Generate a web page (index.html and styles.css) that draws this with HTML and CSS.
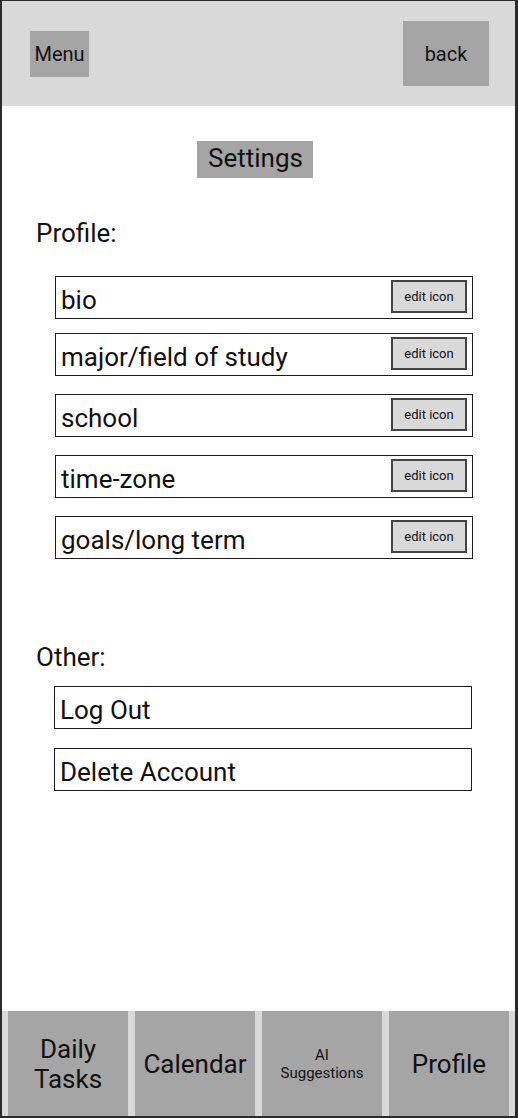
FILE: index.html
```html
<!DOCTYPE html>
<html lang="en">
<head>
<meta charset="utf-8">
<title>Settings</title>
<link rel="stylesheet" href="styles.css">
</head>
<body>
<div class="app">
  <header class="topbar">
    <div class="btn btn-menu">Menu</div>
    <div class="btn btn-back">back</div>
  </header>
  <main class="content">
    <div class="title-wrap"><h1 class="title">Settings</h1></div>
    <h2 class="section-label">Profile:</h2>
    <div class="rows rows-profile">
      <div class="row"><span class="row-text">bio</span><span class="edit">edit icon</span></div>
      <div class="row"><span class="row-text">major/field of study</span><span class="edit">edit icon</span></div>
      <div class="row"><span class="row-text">school</span><span class="edit">edit icon</span></div>
      <div class="row"><span class="row-text">time-zone</span><span class="edit">edit icon</span></div>
      <div class="row"><span class="row-text">goals/long term</span><span class="edit">edit icon</span></div>
    </div>
    <h2 class="section-label section-other">Other:</h2>
    <div class="rows rows-other">
      <div class="row row-plain"><span class="row-text">Log Out</span></div>
      <div class="row row-plain"><span class="row-text">Delete Account</span></div>
    </div>
  </main>
  <nav class="tabbar">
    <div class="tab">Daily<br>Tasks</div>
    <div class="tab">Calendar</div>
    <div class="tab tab-small">AI<br>Suggestions</div>
    <div class="tab">Profile</div>
  </nav>
</div>
</body>
</html>
```
FILE: styles.css
```css
* { box-sizing: border-box; }
html, body { margin: 0; padding: 0; background: #fff; }
body { font-family: Roboto, "Liberation Sans", sans-serif; color: #111; }

.app {
  width: 518px;
  height: 1118px;
  border: 2px solid #2b2b2b;
  border-right-width: 3px;
  border-top-width: 1px;
  display: flex;
  flex-direction: column;
  background: #fff;
}

.topbar {
  height: 105px;
  background: #d9d9d9;
  display: flex;
  align-items: center;
  justify-content: space-between;
  padding: 0 26px 0 28px;
  flex: none;
}
.btn {
  background: #a5a5a5;
  font-size: 20px;
  line-height: 24px;
  display: flex;
  align-items: center;
  justify-content: center;
}
.btn-menu { width: 59px; height: 46px; }
.btn-back { width: 86px; height: 65px; }

.content {
  flex: 1;
  display: flex;
  flex-direction: column;
}
.title-wrap { display: flex; justify-content: center; padding-top: 35px; padding-right: 7px; }
.title {
  margin: 0;
  background: #a5a5a5;
  font-weight: 400;
  font-size: 26px;
  line-height: 30px;
  padding: 2px 10px 5px 11px;
}
.section-label {
  margin: 40px 0 0 34px;
  font-weight: 400;
  font-size: 26px;
  line-height: 30px;
}
.section-other { margin-top: 83px; }

.rows { display: flex; flex-direction: column; gap: 18px; margin-top: 28px; padding: 0 42px 0 53px; }
.rows-profile .row:first-child { margin-bottom: -4px; }
.rows-other { margin-top: 14px; gap: 19px; padding: 0 43px 0 52px; }

.row {
  height: 43px;
  border: 1.5px solid #1a1a1a;
  display: flex;
  align-items: center;
  justify-content: space-between;
  padding: 0 5px 0 5px;
}
.row-text {
  font-size: 26px;
  line-height: 30px;
  padding-top: 4px;
}
.edit {
  width: 76px;
  height: 33px;
  background: #d9d9d9;
  border: 2px solid #444;
  font-size: 13px;
  display: flex;
  align-items: center;
  justify-content: center;
  margin-bottom: 2px;
}

.tabbar {
  height: 105px;
  flex: none;
  background: #d9d9d9;
  display: flex;
  gap: 7px;
  padding: 0 6px 0 6px;
}
.tab {
  width: 120px;
  background: #a5a5a5;
  display: flex;
  align-items: center;
  justify-content: center;
  text-align: center;
  font-size: 26px;
  line-height: 30px;
}
.tab-small {
  font-size: 15px;
  line-height: 18px;
}
```
